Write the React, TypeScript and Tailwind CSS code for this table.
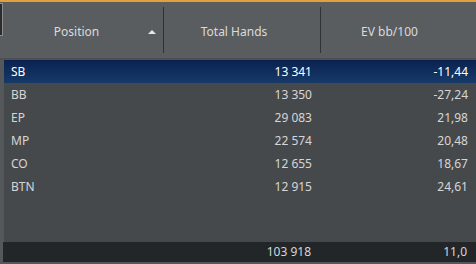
import React from "react";

const rows = [
  { pos: "SB", hands: "13 341", ev: "-11,44", sel: true },
  { pos: "BB", hands: "13 350", ev: "-27,24" },
  { pos: "EP", hands: "29 083", ev: "21,98" },
  { pos: "MP", hands: "22 574", ev: "20,48" },
  { pos: "CO", hands: "12 655", ev: "18,67" },
  { pos: "BTN", hands: "12 915", ev: "24,61" },
];

export default function App() {
  return (
    <div
      className="w-[476px] h-[264px] flex flex-col bg-[#55585b] text-[12px] text-[#d6d6d6] overflow-hidden"
      style={{ fontFamily: '"Noto Sans", "Open Sans", sans-serif' }}
    >
      <div className="h-[2px] bg-[#e3a13c] shrink-0" />
      {/* header */}
      <div className="relative h-[56px] flex bg-[#5a5d60] shrink-0">
        <div className="absolute left-0 top-[1px] w-[3px] h-[33px] bg-[#2a2c2e] border-y border-r border-[#8c8c8c]" />
        <div className="w-[163px] flex items-center justify-center relative text-[#dadada] pt-[3px] pr-[10px]">
          <span>Position</span>
          <svg className="absolute left-[148px] top-[28px]" width="8" height="4" viewBox="0 0 8 4">
            <polygon points="4,0 8,4 0,4" fill="#e8e8e8" />
          </svg>
        </div>
        <div className="w-px my-[5px] bg-[#303234]" />
        <div className="w-[156px] flex items-center justify-center text-[#dadada] pt-[3px] pr-[16px]">Total Hands</div>
        <div className="w-px my-[5px] bg-[#303234]" />
        <div className="flex-1 flex items-center justify-center text-[#dadada] pt-[3px] pr-[18px]">EV bb/100</div>
      </div>
      <div className="h-[2px] bg-[#4d5053] shrink-0" />
      {/* body */}
      <div className="flex-1 ml-[4px] bg-[#46494c] flex flex-col">
        {rows.map((r) => (
          <div
            key={r.pos}
            className={
              "h-[23px] flex items-center " +
              (r.sel ? "bg-gradient-to-b from-[#0a2250] to-[#173a69] text-white" : "")
            }
          >
            <div className="w-[159px] pl-[7px]">{r.pos}</div>
            <div className="w-[157px] text-right pr-[8px]">{r.hands}</div>
            <div className="flex-1 text-right pr-[8px]">{r.ev}</div>
          </div>
        ))}
      </div>
      {/* footer */}
      <div className="h-[20px] ml-[3px] bg-[#232629] flex items-center shrink-0">
        <div className="w-[160px]" />
        <div className="w-[157px] text-right pr-[9px]">103 918</div>
        <div className="flex-1 text-right pr-[9px]">11,0</div>
      </div>
      <div className="h-[2px] bg-[#55585b] shrink-0" />
    </div>
  );
}
